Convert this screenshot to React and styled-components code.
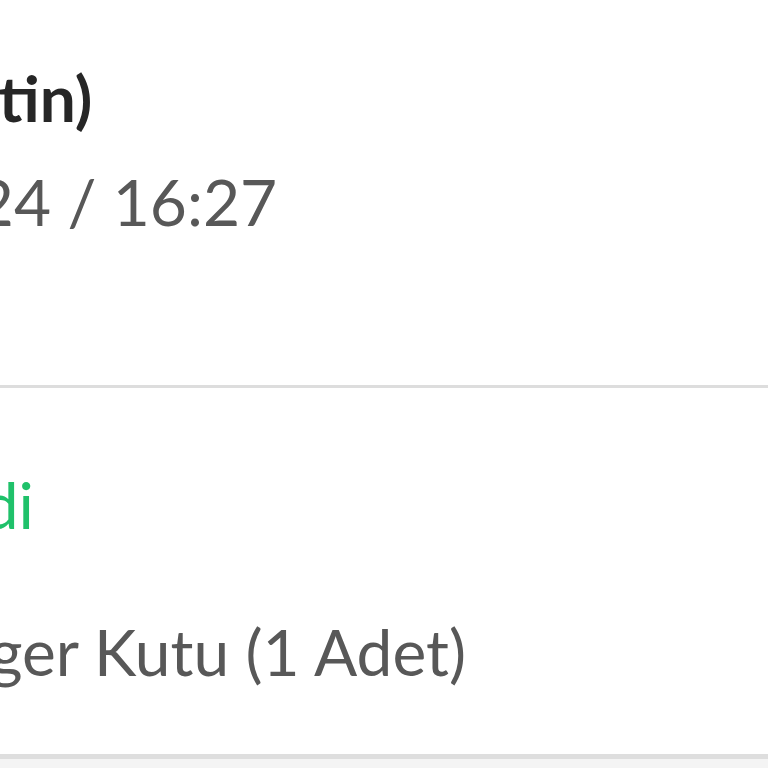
import React from 'react';
import styled, { createGlobalStyle } from 'styled-components';

const GlobalStyle = createGlobalStyle`
  html, body {
    margin: 0;
    background: #f4f4f4;
    overflow: hidden;
  }
  body {
    font-family: Lato, "Noto Sans", sans-serif;
  }
`;

const Page = styled.div`
  width: 768px;
  height: 768px;
  overflow: hidden;
  background: #f4f4f4;
`;

const Card = styled.div`
  margin-left: -283px;
  width: 1100px;
  background: #fff;
  border-bottom: 5px solid #dedede;
`;

const Section = styled.section`
  padding: ${(p) => p.pad};
  border-bottom: ${(p) => (p.divider ? '3px solid #dddddd' : 'none')};
`;

const Title = styled.div`
  font-size: 64px;
  font-weight: 700;
  line-height: 1.2;
  color: #262626;
  white-space: nowrap;
`;

const Meta = styled.div`
  margin-top: ${(p) => p.gap || 0}px;
  font-size: 64px;
  line-height: 1.2;
  color: #585858;
  white-space: nowrap;
`;

const DateRow = styled.div`
  display: flex;
  align-items: center;
  gap: 12px;
  margin-top: 27.2px;
  font-size: 64px;
  line-height: 1.2;
  color: #585858;
  white-space: nowrap;

  svg {
    flex: none;
  }
`;

const StatusRow = styled.div`
  display: flex;
  align-items: center;
  gap: 12px;
  font-size: 64px;
  line-height: 1.2;
  color: #1fc16a;
  white-space: nowrap;
`;

const Dot = styled.span`
  width: 12px;
  height: 12px;
  border-radius: 50%;
  background: #1fc16a;
  flex: none;
`;

const Rating = styled.div`
  display: flex;
  gap: 20px;
  margin-top: 49px;
  height: 40px;
`;

const Star = () => (
  <svg width="40" height="40" viewBox="0 0 24 24" fill="#f5b400">
    <path d="M12 2l2.9 6.26 6.85.74-5.1 4.62 1.42 6.74L12 16.9l-6.07 3.46 1.42-6.74L2.25 9l6.85-.74z" />
  </svg>
);

const ClockIcon = () => (
  <svg width="32" height="32" viewBox="0 0 24 24" fill="none" stroke="#585858" strokeWidth="2" strokeLinecap="round">
    <circle cx="12" cy="12" r="10" />
    <path d="M12 6v6l4 2" />
  </svg>
);

export default function App() {
  return (
    <>
      <GlobalStyle />
      <Page>
        <Card>
          <Section pad="60px 0 55px" divider>
            <Title>Satıcı (Metin)</Title>
            <DateRow>
              <ClockIcon />
              2.04.2024 / 16:27
            </DateRow>
            <Rating>
              {[0, 1, 2, 3, 4].map((i) => (
                <Star key={i} />
              ))}
            </Rating>
          </Section>
          <Section pad="79px 0 63px">
            <StatusRow>
              <Dot />
              Gönderildi
            </StatusRow>
            <Meta gap={70.2}>Ürün: Burger Kutu (1 Adet)</Meta>
          </Section>
        </Card>
      </Page>
    </>
  );
}
